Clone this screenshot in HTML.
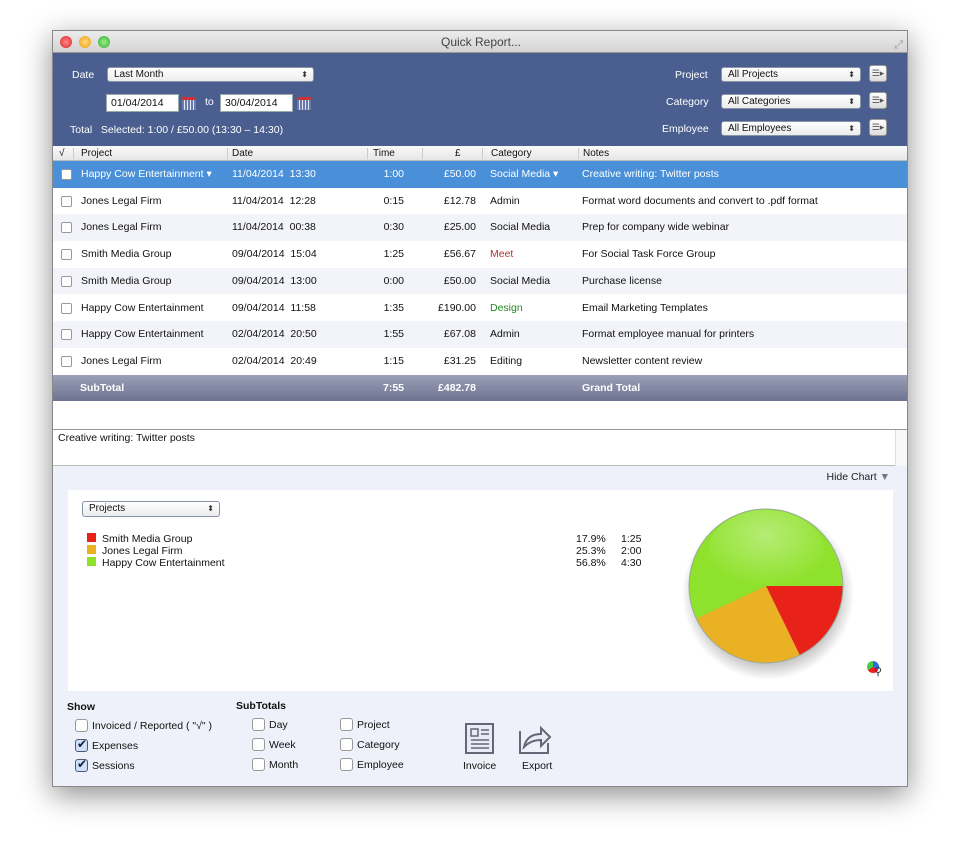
<!DOCTYPE html>
<html><head><meta charset="utf-8"><style>
*{box-sizing:border-box;margin:0;padding:0}
body{width:960px;height:860px;background:#fff;font-family:"Liberation Sans",sans-serif;font-size:10.5px;color:#111;position:relative;overflow:hidden}
.a{position:absolute}
#win{left:52px;top:30px;width:856px;height:757px;background:#eef1f9;box-shadow:0 8px 28px rgba(0,0,0,.45);border:1px solid #888;overflow:hidden}
#title{left:0;top:0;width:856px;height:22px;background:linear-gradient(#ececec,#d4d4d4);border-bottom:1px solid #999;text-align:center;line-height:22px;font-size:12px;color:#444}
.tl{top:5px;width:12px;height:12px;border-radius:6px}
#hdr{left:0;top:22px;width:856px;height:93px;background:#4a5f8f;color:#fff}
.sel{background:linear-gradient(#fff,#ececec);border:1px solid #8a94a8;border-radius:3px;color:#111;height:15px;line-height:13px;padding-left:6px;font-size:10px}
.sel:after{content:"⬍";position:absolute;right:5px;top:0;font-size:8px;color:#333}
.inp{background:#fff;border:1px solid #9aa;height:18px;line-height:16px;padding-left:4px;color:#111;font-size:10.5px}
.cal{width:14px;height:13px;background:repeating-linear-gradient(90deg,#6b7bb0 0 2px,#dfe3f0 2px 3px);border-top:3px solid #c33}
.btn{width:18px;height:17px;background:linear-gradient(#fff,#ddd);border-radius:3px;border:1px solid #999;color:#555;font-size:9px;text-align:center;line-height:15px}
#th{left:0;top:115px;width:856px;height:15px;background:linear-gradient(#fafafa,#e6e6e6);border-bottom:1px solid #bbb;font-size:10px;line-height:15px}
#th span{position:absolute;top:0}
.sep{position:absolute;top:2px;width:1px;height:11px;background:#ccc}
.row{position:absolute;left:0;width:856px;height:26.7px;line-height:26.7px}
.row span{position:absolute;top:0;white-space:nowrap}
.cb{position:absolute;left:8px;top:8px;width:11px;height:11px;border:1px solid #999;border-radius:2px;background:#fff}
.r{text-align:right}
.bcb{width:13px;height:13px;border:1px solid #999;border-radius:3px;background:#fff}
.ck{background:#cfe0fb;border-color:#557}
.ck:after{content:"✔";position:absolute;left:1px;top:-3px;font-size:12px;color:#123}
</style></head><body>
<div id="win" class="a">
 <div id="title" class="a">Quick Report...
  <div class="a tl" style="left:7px;background:radial-gradient(#f88,#d22)"></div>
  <div class="a tl" style="left:26px;background:radial-gradient(#fd8,#e90)"></div>
  <div class="a tl" style="left:45px;background:radial-gradient(#9e8,#3a3)"></div>
  <div class="a" style="right:6px;top:3px;color:#999;font-size:11px">⤢</div>
 </div>
 <div id="hdr" class="a">
  <div class="a" style="left:19px;top:16px">Date</div>
  <div class="a sel" style="left:54px;top:14px;width:207px">Last Month</div>
  <div class="a inp" style="left:53px;top:41px;width:73px">01/04/2014</div>
  <div class="a cal" style="left:129px;top:44px"></div>
  <div class="a" style="left:152px;top:43px">to</div>
  <div class="a inp" style="left:167px;top:41px;width:73px">30/04/2014</div>
  <div class="a cal" style="left:244px;top:44px"></div>
  <div class="a" style="left:17px;top:71px">Total&nbsp;&nbsp;&nbsp;Selected: 1:00 / £50.00 (13:30 – 14:30)</div>
  <div class="a" style="left:622px;top:16px">Project</div>
  <div class="a sel" style="left:668px;top:14px;width:140px">All Projects</div>
  <div class="a btn" style="left:816px;top:12px">☰▸</div>
  <div class="a" style="left:613px;top:43px">Category</div>
  <div class="a sel" style="left:668px;top:41px;width:140px">All Categories</div>
  <div class="a btn" style="left:816px;top:39px">☰▸</div>
  <div class="a" style="left:609px;top:70px">Employee</div>
  <div class="a sel" style="left:668px;top:68px;width:140px">All Employees</div>
  <div class="a btn" style="left:816px;top:66px">☰▸</div>
 </div>
 <div id="th" class="a">
  <span style="left:6px">√</span><div class="sep" style="left:20px"></div>
  <span style="left:28px">Project</span><div class="sep" style="left:174px"></div>
  <span style="left:179px">Date</span><div class="sep" style="left:314px"></div>
  <span style="left:320px">Time</span><div class="sep" style="left:369px"></div>
  <span style="left:402px">£</span><div class="sep" style="left:429px"></div>
  <span style="left:438px">Category</span><div class="sep" style="left:525px"></div>
  <span style="left:530px">Notes</span>
 </div>
 <div class="a" style="left:0;top:130px;width:856px;height:268px;background:#fff">
  <div class="row" style="top:0;background:#4a90d9;color:#fff"><div class="cb"></div><span style="left:28px">Happy Cow Entertainment ▾</span><span style="left:179px">11/04/2014&nbsp;&nbsp;13:30</span><span class="r" style="left:300px;width:51px">1:00</span><span class="r" style="left:360px;width:63px">£50.00</span><span style="left:437px">Social Media ▾</span><span style="left:529px">Creative writing: Twitter posts</span></div>
  <div class="row" style="top:26.7px"><div class="cb"></div><span style="left:28px">Jones Legal Firm</span><span style="left:179px">11/04/2014&nbsp;&nbsp;12:28</span><span class="r" style="left:300px;width:51px">0:15</span><span class="r" style="left:360px;width:63px">£12.78</span><span style="left:437px">Admin</span><span style="left:529px">Format word documents and convert to .pdf format</span></div>
  <div class="row" style="top:53.4px;background:#f3f4f9"><div class="cb"></div><span style="left:28px">Jones Legal Firm</span><span style="left:179px">11/04/2014&nbsp;&nbsp;00:38</span><span class="r" style="left:300px;width:51px">0:30</span><span class="r" style="left:360px;width:63px">£25.00</span><span style="left:437px">Social Media</span><span style="left:529px">Prep for company wide webinar</span></div>
  <div class="row" style="top:80.1px"><div class="cb"></div><span style="left:28px">Smith Media Group</span><span style="left:179px">09/04/2014&nbsp;&nbsp;15:04</span><span class="r" style="left:300px;width:51px">1:25</span><span class="r" style="left:360px;width:63px">£56.67</span><span style="left:437px;color:#a33">Meet</span><span style="left:529px">For Social Task Force Group</span></div>
  <div class="row" style="top:106.8px;background:#f3f4f9"><div class="cb"></div><span style="left:28px">Smith Media Group</span><span style="left:179px">09/04/2014&nbsp;&nbsp;13:00</span><span class="r" style="left:300px;width:51px">0:00</span><span class="r" style="left:360px;width:63px">£50.00</span><span style="left:437px">Social Media</span><span style="left:529px">Purchase license</span></div>
  <div class="row" style="top:133.5px"><div class="cb"></div><span style="left:28px">Happy Cow Entertainment</span><span style="left:179px">09/04/2014&nbsp;&nbsp;11:58</span><span class="r" style="left:300px;width:51px">1:35</span><span class="r" style="left:360px;width:63px">£190.00</span><span style="left:437px;color:#282">Design</span><span style="left:529px">Email Marketing Templates</span></div>
  <div class="row" style="top:160.2px;background:#f3f4f9"><div class="cb"></div><span style="left:28px">Happy Cow Entertainment</span><span style="left:179px">02/04/2014&nbsp;&nbsp;20:50</span><span class="r" style="left:300px;width:51px">1:55</span><span class="r" style="left:360px;width:63px">£67.08</span><span style="left:437px">Admin</span><span style="left:529px">Format employee manual for printers</span></div>
  <div class="row" style="top:186.9px"><div class="cb"></div><span style="left:28px">Jones Legal Firm</span><span style="left:179px">02/04/2014&nbsp;&nbsp;20:49</span><span class="r" style="left:300px;width:51px">1:15</span><span class="r" style="left:360px;width:63px">£31.25</span><span style="left:437px">Editing</span><span style="left:529px">Newsletter content review</span></div>
  <div class="row" style="top:214px;height:26px;line-height:26px;background:linear-gradient(#9ba0b8,#6e7390);color:#fff;font-weight:bold"><span style="left:27px">SubTotal</span><span class="r" style="left:300px;width:51px">7:55</span><span class="r" style="left:360px;width:63px">£482.78</span><span style="left:529px">Grand Total</span></div>
 </div>
 <div class="a" style="left:0;top:398px;width:856px;height:37px;background:#fff;border-top:1px solid #999;border-bottom:1px solid #bbb;padding:2px 5px">Creative writing: Twitter posts<div class="a" style="right:0;top:0;width:14px;height:36px;border-left:1px solid #ddd;background:#f8f8f8"></div></div>
 <div class="a" style="right:17px;top:440px;color:#222">Hide Chart <span style="color:#777">▼</span></div>
 <div class="a" style="left:15px;top:459px;width:825px;height:201px;background:#fff">
  <div class="a sel" style="left:14px;top:11px;width:138px;height:16px">Projects</div>
  <div class="a" style="left:19px;top:43px;line-height:12px">
   <div><span style="display:inline-block;width:9px;height:9px;background:#e82218;margin-right:6px"></span>Smith Media Group</div>
   <div><span style="display:inline-block;width:9px;height:9px;background:#eab125;margin-right:6px"></span>Jones Legal Firm</div>
   <div><span style="display:inline-block;width:9px;height:9px;background:#8fe22c;margin-right:6px"></span>Happy Cow Entertainment</div>
  </div>
  <div class="a" style="left:508px;top:43px;line-height:12px;text-align:right">17.9%<br>25.3%<br>56.8%</div>
  <div class="a" style="left:553px;top:43px;line-height:12px">1:25<br>2:00<br>4:30</div>
  <svg class="a" style="left:600px;top:0" width="200" height="200">
   <defs><radialGradient id="sh" cx=".5" cy=".5" r=".5"><stop offset=".7" stop-color="#000" stop-opacity=".35"/><stop offset="1" stop-color="#000" stop-opacity="0"/></radialGradient>
   <radialGradient id="hl" cx=".5" cy=".3" r=".6"><stop offset="0" stop-color="#fff" stop-opacity=".35"/><stop offset="1" stop-color="#fff" stop-opacity="0"/></radialGradient></defs>
   <ellipse cx="100" cy="104" rx="86" ry="86" fill="url(#sh)"/>
   <path d="M98 96 L175 96 A77 77 0 0 1 131.8 165.2 Z" fill="#e82218"/>
   <path d="M98 96 L131.8 165.2 A77 77 0 0 1 28.2 128.5 Z" fill="#eab125"/>
   <path d="M98 96 L28.2 128.5 A77 77 0 1 1 175 96 Z" fill="#8fe22c"/>
   <ellipse cx="98" cy="62" rx="58" ry="42" fill="url(#hl)"/>
   <circle cx="98" cy="96" r="77" fill="none" stroke="#9a9" stroke-width="1"/>
  </svg>
  <div class="a" style="left:799px;top:171px;width:12px;height:12px;border-radius:6px;background:conic-gradient(#2a6be0 0 33%,#e22 0 66%,#4c4 0)"></div>
  <div class="a" style="left:806px;top:175px;font-size:11px;color:#333">⚲</div>
 </div>
 <div class="a" style="left:14px;top:670px;font-weight:bold">Show</div>
 <div class="a bcb" style="left:22px;top:688px"></div><div class="a" style="left:39px;top:689px">Invoiced / Reported ( "√" )</div>
 <div class="a bcb ck" style="left:22px;top:708px"></div><div class="a" style="left:39px;top:709px">Expenses</div>
 <div class="a bcb ck" style="left:22px;top:728px"></div><div class="a" style="left:39px;top:729px">Sessions</div>
 <div class="a" style="left:183px;top:669px;font-weight:bold">SubTotals</div>
 <div class="a bcb" style="left:199px;top:687px"></div><div class="a" style="left:216px;top:688px">Day</div>
 <div class="a bcb" style="left:199px;top:707px"></div><div class="a" style="left:216px;top:708px">Week</div>
 <div class="a bcb" style="left:199px;top:727px"></div><div class="a" style="left:216px;top:728px">Month</div>
 <div class="a bcb" style="left:287px;top:687px"></div><div class="a" style="left:304px;top:688px">Project</div>
 <div class="a bcb" style="left:287px;top:707px"></div><div class="a" style="left:304px;top:708px">Category</div>
 <div class="a bcb" style="left:287px;top:727px"></div><div class="a" style="left:304px;top:728px">Employee</div>
 <svg class="a" style="left:410px;top:690px" width="34" height="34"><rect x="3" y="3" width="27" height="29" fill="#e8ebf3" stroke="#667" stroke-width="2"/><rect x="8" y="8" width="7" height="7" fill="none" stroke="#667" stroke-width="1.5"/><path d="M18 9h8M18 13h8M8 19h18M8 23h18M8 27h18" stroke="#667" stroke-width="1.5"/></svg>
 <div class="a" style="left:410px;top:729px">Invoice</div>
 <svg class="a" style="left:464px;top:690px" width="36" height="34"><path d="M3 10v22h28v-10" fill="none" stroke="#667" stroke-width="2"/><path d="M7 26c2-9 8-13 17-13v-6l9 9-9 9v-6c-7 0-12 2-17 7z" fill="#e8ebf3" stroke="#667" stroke-width="2"/></svg>
 <div class="a" style="left:469px;top:729px">Export</div>
</div>
</body></html>
